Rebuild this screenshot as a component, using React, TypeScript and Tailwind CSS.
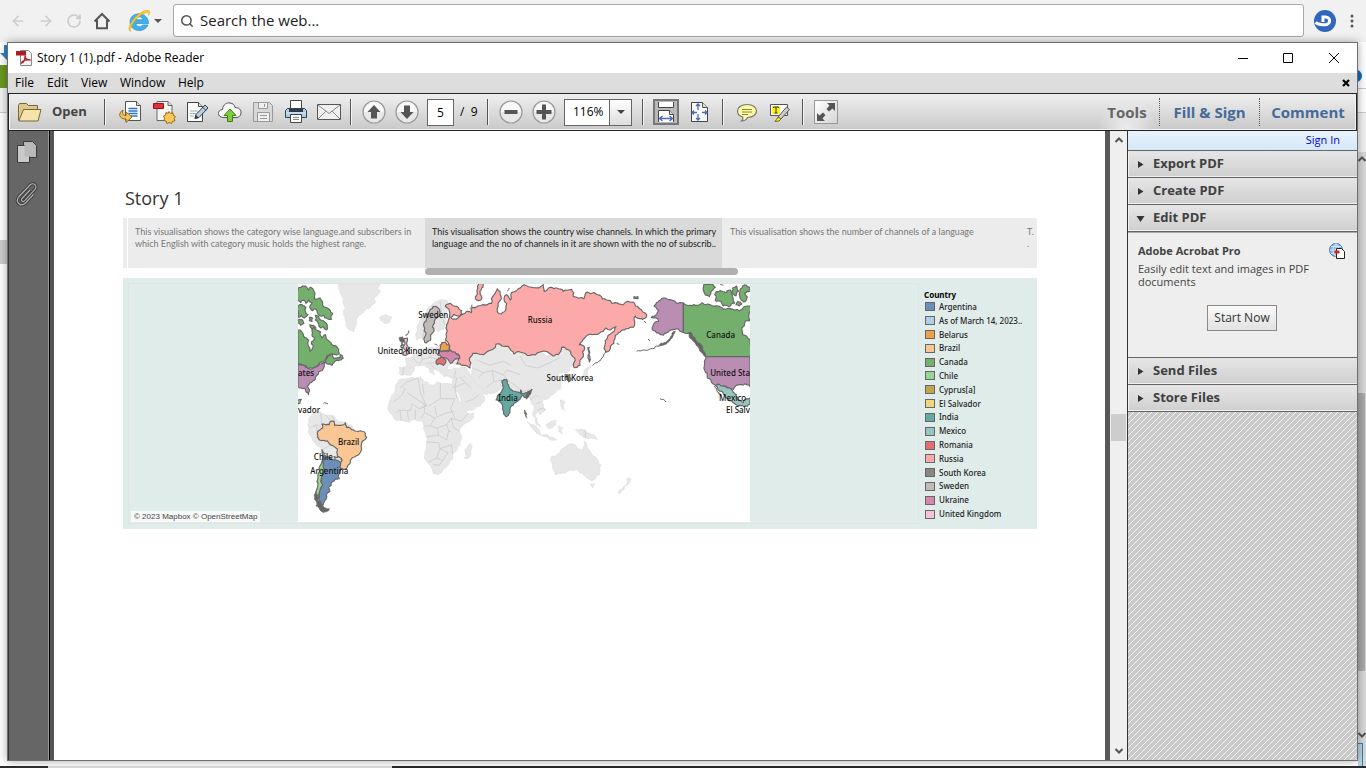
import React from "react";
import { ArrowLeft, ArrowRight, RotateCw, Search } from "lucide-react";

type Pt = [number, number];

function parse(s: string): Pt[] {
  return s
    .trim()
    .split(/\s+/)
    .map((p) => p.split(",").map(Number) as Pt);
}

function noise(a: number, b: number) {
  const v = Math.sin(a * 12.9898 + b * 78.233) * 43758.5453;
  return (v - Math.floor(v)) * 2 - 1;
}

// Breaks the long edges of a coast into small irregular steps.
function coast(s: string, amount = 0.16, closed = true) {
  let pts = parse(s);
  for (let pass = 0; pass < 2; pass++) {
    const out: Pt[] = [];
    pts.forEach((p, i) => {
      out.push(p);
      if (!closed && i === pts.length - 1) return;
      const q = pts[(i + 1) % pts.length];
      const dx = q[0] - p[0];
      const dy = q[1] - p[1];
      const straight = (dx === 0 || dy === 0) && Math.hypot(dx, dy) > 60;
      if (Math.hypot(dx, dy) < 7 || straight) return;
      const n = noise(p[0] + q[0], p[1] + q[1]) * amount;
      out.push([(p[0] + q[0]) / 2 - dy * n, (p[1] + q[1]) / 2 + dx * n]);
    });
    pts = out;
  }
  return "M" + pts.map((p) => p[0].toFixed(1) + "," + p[1].toFixed(1)).join("L") + (closed ? "Z" : "");
}

const plainLand = [
  "145,18 270,18 262,30 272,42 250,60 256,74 240,90 222,100 205,115 198,140 192,162 180,155 168,140 160,110 166,90 160,60 150,40",
  "268,118 278,113 290,110 306,118 300,130 284,136 272,128",
  "56,425 66,410 75,405 90,402 108,412 128,412 145,432 170,436 190,450 160,520 155,550 120,560 98,540 98,515 78,500 66,480 58,450",
  "375,170 380,145 398,110 415,88 440,70 468,66 474,90 466,130 462,152 445,162 436,150 425,170 408,192 394,180 380,185",
  "328,268 350,264 373,270 370,282 356,292 334,292 328,284",
  "346,242 366,236 380,226 398,212 408,214 440,210 466,195 480,216 505,240 500,258 476,262 470,280 452,286 440,276 428,272 434,290 422,284 405,262 388,262 372,268 352,264",
  "450,282 478,274 506,272 530,270 540,288 530,300 490,300 462,296",
  "488,304 520,296 540,290 560,312 590,328 612,334 604,346 576,346 584,362 572,382 550,396 526,400 514,372 500,340 488,322",
  "538,240 548,226 590,222 618,198 655,205 665,228 720,232 750,222 790,234 805,230 815,208 835,215 852,238 856,258 840,268 828,286 806,284 814,310 812,332 792,348 762,364 748,356 760,380 766,396 752,410 742,398 734,410 742,432 750,448 738,438 728,404 722,366 700,350 664,352 640,330 600,345 566,324 545,300 548,270",
  "328,304 366,298 392,296 398,312 428,322 444,312 488,320 500,350 516,384 534,406 550,404 540,430 508,462 510,500 488,528 478,556 456,582 430,586 418,560 404,530 410,492 402,456 398,430 372,424 342,430 316,426 296,400 298,370 316,336",
  "525,515 542,496 546,510 534,542 523,540",
  "785,535 810,524 826,506 842,498 858,502 864,514 878,516 882,490 892,508 904,524 922,544 934,562 928,590 912,606 892,600 880,590 860,574 828,584 796,590 788,562",
  "902,618 914,618 908,630",
  "984,642 1000,626 1008,622 1002,634 988,648",
  "1008,620 1012,600 1024,604 1016,618",
  "712,432 728,440 750,464 756,474 742,468 722,446",
  "756,472 788,478 800,486 774,480",
  "768,440 784,430 798,426 796,442 786,450 772,448",
  "806,444 820,450 812,454 816,468 808,462",
  "856,454 884,456 912,470 922,484 906,480 886,478 866,464",
  "812,366 824,374 822,396 814,388",
  "888,272 904,262 896,274 892,292 878,300 866,304 880,290",
];

const innerBorders = [
  "M330,330L350,312L384,300M345,330L338,350L310,372M352,344L410,384L388,392L366,378M384,300L392,346L410,384M398,318L402,352M451,316V362L416,384M451,362H494M494,320L500,360M402,372L404,404L392,420M366,378L362,398L330,396L318,404M330,396L334,428M352,400L356,426M376,394L376,424M404,404L434,420L466,406L490,400M434,384L440,412M494,362L482,392L494,418M434,420L420,444L404,444M420,444L442,450L446,472L410,476M442,450L470,440L476,458L470,486L446,472M470,440L484,420L514,430L534,406M484,420L490,448L508,460M410,492L446,494L450,512L484,500M450,512L440,540L416,552M440,540L458,548L474,524L450,512M484,500L488,528M430,560L448,562L458,548M484,462L476,458",
  "M60,450L78,440L92,446M78,440L82,462M92,404L96,440M108,412L122,430M128,412L132,430M98,515L112,506L124,502M100,538L116,532",
  "M690,234L706,262L742,270L780,254L808,240M548,270L580,284L606,278L640,290L652,276L690,290M606,278L612,310L590,328M580,284L566,300M612,310L636,306M560,246L600,262L640,250L664,262M722,366L736,352L748,356M736,378L752,372M742,398L756,390L766,396M640,290L652,306L700,340L722,334",
  "M500,300L496,322M512,298L526,314L544,330M488,330L512,320L526,314M526,372L550,364L566,350M498,276L492,300",
  "M366,238L384,256M388,226L398,244L388,262M398,244L420,238L440,242M420,238V220M408,256L436,254M424,262L440,276M340,268L338,292M886,456V480M450,70L456,110L464,140M400,110L404,140L398,182",
];

type Shape = { d: string; c: string };
const countries: Shape[] = [
  { c: "#74af6d", d: "24,30 42,24 50,28 56,36 62,28 70,34 75,45 72,62 90,60 97,70 98,82 112,90 128,106 124,124 112,122 100,112 90,114 82,104 76,92 68,98 60,84 66,74 56,66 48,76 40,66 32,74 24,68" },
  { c: "#74af6d", d: "24,84 36,80 48,88 46,100 54,110 44,120 34,112 24,118" },
  { c: "#74af6d", d: "76,112 86,116 92,126 104,132 112,142 110,156 98,146 92,150 84,134 76,126" },
  { c: "#74af6d", d: "26,124 38,126 42,136 32,142 26,136" },
  { c: "#74af6d", d: "58,118 68,120 66,130 58,128" },
  { c: "#74af6d", d: "60,140 70,142 78,150 66,154" },
  { c: "#74af6d", d: "24,156 34,160 44,178 56,186 60,220 66,214 64,192 72,178 66,160 72,148 82,158 92,162 96,180 106,170 118,190 136,203 146,214 148,226 128,228 112,232 104,248 84,262 70,270 55,272 42,262 24,258" },
  { c: "#74af6d", d: "112,238 128,228 132,242 150,240 150,230 160,240 154,246 138,248 126,262 112,258 104,254" },
  { c: "#ba8db2", d: "24,260 42,262 55,272 75,268 104,252 102,268 86,282 76,304 60,314 52,325 58,340 56,350 48,342 44,330 24,326" },
  { c: "#96c5bf", d: "24,366 34,364 30,376 24,378" },
  { c: "#fac794", d: "82,468 90,455 98,450 96,438 118,440 122,430 132,430 134,442 152,442 166,434 170,448 185,455 205,460 226,466 230,478 214,502 210,525 195,536 182,545 176,560 160,574 146,562 156,545 142,535 142,512 125,502 112,488 95,488 82,478" },
  { c: "#dedede", d: "132,536 146,536 156,548 148,554 136,548" },
  { c: "#6c8fb7", d: "104,540 120,538 138,546 152,560 152,572 146,590 148,602 126,612 116,628 120,640 108,650 104,668 98,682 88,668 88,640 92,600 98,565" },
  { c: "#99d594", d: "96,515 102,525 99,565 94,600 89,640 88,660 80,662 78,645 84,620 84,600 92,560" },
  { c: "#f4c3d7", d: "342,182 352,180 350,194 354,206 360,214 358,226 348,232 338,230 348,216 340,204" },
  { c: "#c0bbb8", d: "430,85 445,90 450,100 440,120 430,140 432,155 422,170 420,188 408,195 402,180 404,150 410,120 420,95" },
  { c: "#fbaaa9", d: "466,85 480,76 500,85 515,98 510,115 490,110 482,118 498,124 525,106 532,100 544,104 548,88 580,80 605,76 612,50 622,32 630,40 628,70 622,100 634,108 648,94 642,62 650,50 662,66 664,44 680,38 702,20 760,20 762,40 784,28 800,30 820,40 845,34 850,56 882,62 892,42 930,52 950,66 985,76 1000,80 1030,72 1036,84 1055,96 1070,110 1066,120 1048,122 1036,114 1034,130 1030,148 1008,152 990,162 976,172 972,196 958,218 948,222 945,200 952,180 972,160 978,146 960,156 948,150 928,166 900,168 884,180 868,200 884,210 880,235 870,262 852,268 854,240 835,215 815,208 805,230 790,234 750,222 720,232 690,222 672,228 655,205 618,198 590,222 548,226 538,240 540,270 520,262 500,258 510,240 505,228 480,215 475,195 466,186 468,150 474,130" },
  { c: "#fbaaa9", d: "566,18 580,18 574,34 570,48 576,60 564,68 556,60 562,46" },
  { c: "#fbaaa9", d: "893,210 898,208 900,236 898,252 894,240" },
  { c: "#fbaaa9", d: "1032,56 1044,56 1044,62 1032,62" },
  { c: "#f09f4d", d: "448,216 450,202 465,192 480,204 478,215 462,218" },
  { c: "#d686ab", d: "442,230 448,218 462,219 480,217 495,222 508,232 506,242 490,248 482,256 475,245 455,240" },
  { c: "#e36f70", d: "438,255 446,240 462,242 468,252 460,262 442,260" },
  { c: "#66a8a2", d: "636,308 650,305 655,320 660,332 680,342 692,346 692,336 694,348 710,344 726,334 722,346 710,362 698,352 690,364 672,376 660,395 655,412 648,416 638,395 630,372 618,366 622,354 632,344 640,328" },
  { c: "#8b8b88", d: "830,290 840,290 844,304 836,312 830,304" },
  { c: "#ba8db2", d: "1180,75 1145,66 1120,60 1104,72 1092,85 1106,98 1100,108 1084,118 1106,130 1090,140 1090,158 1105,165 1120,172 1138,158 1160,152 1180,163" },
  { c: "#74af6d", d: "1180,75 1200,82 1222,82 1236,74 1260,80 1284,84 1300,94 1320,92 1348,98 1380,84 1380,128 1364,134 1356,150 1358,170 1380,184 1380,236 1248,236 1236,214 1226,200 1210,186 1202,168 1180,163" },
  { c: "#74af6d", d: "1242,18 1266,18 1276,28 1262,42 1258,56 1244,46" },
  { c: "#74af6d", d: "1274,50 1290,38 1306,44 1320,36 1328,56 1334,76 1318,86 1300,84 1292,70 1276,68" },
  { c: "#74af6d", d: "1328,30 1340,24 1346,40 1338,54 1328,46" },
  { c: "#74af6d", d: "1350,36 1358,24 1380,28 1380,40 1364,46 1372,58 1360,72 1350,60" },
  { c: "#74af6d", d: "1344,70 1356,78 1348,84 1338,80" },
  { c: "#ba8db2", d: "1248,236 1380,236 1380,326 1368,318 1350,320 1330,334 1312,328 1298,324 1270,318 1252,300 1244,276 1244,256" },
  { c: "#96c5bf", d: "1278,322 1298,324 1312,330 1328,338 1338,352 1346,368 1360,374 1370,362 1380,360 1380,378 1362,386 1338,380 1318,368 1304,352 1296,340" },
];

const darkBits = [
  "78,640 86,656 88,670 98,684 104,690 118,692 116,698 104,702 90,696 78,684 73,664",
  "328,178 338,176 344,190 336,196 342,204 332,206 336,192",
  "346,172 356,158 352,170",
  "1198,162 1212,176 1226,196 1238,214 1248,234 1240,228 1224,206 1206,184",
  "1106,202 1122,194 1136,184 1146,166 1156,160 1142,184 1124,200",
  "704,396 708,404 712,420 706,410",
  "716,340 722,336 718,352 710,360 708,350",
  "1272,324 1280,334 1290,350 1294,354 1282,342",
];

const islandLines = [
  "1040,220 1060,216 1082,212 1100,204 1124,194",
  "908,262 926,250 940,236 952,220",
  "1110,362 1120,364 1128,372",
  "100,376 114,378",
  "1062,130 1068,134",
  "1074,184 1080,188",
  "980,196 988,200",
  "540,92 546,80",
  "652,40 658,30",
  "1290,18 1300,22",
  "434,198 442,202",
  "330,206 336,210",
];

type Anchor = "start" | "middle" | "end";
const labels: { t: string; x: number; y: number; a?: Anchor }[] = [
  { t: "Sweden", x: 430, y: 119 },
  { t: "United Kingdom", x: 356, y: 227 },
  { t: "Russia", x: 750, y: 134 },
  { t: "India", x: 654, y: 368 },
  { t: "South Korea", x: 840, y: 308 },
  { t: "Canada", x: 1292, y: 179 },
  { t: "United Sta", x: 1380, y: 293, a: "end" },
  { t: "Mexico", x: 1328, y: 368 },
  { t: "El Salv", x: 1380, y: 404, a: "end" },
  { t: "ates", x: 24, y: 293, a: "start" },
  { t: "vador", x: 24, y: 404, a: "start" },
  { t: "Brazil", x: 176, y: 500 },
  { t: "Chile", x: 100, y: 545 },
  { t: "Argentina", x: 118, y: 587 },
];

function WorldMap() {
  return (
    <svg viewBox="24 18 1356 714" className="block h-[238px] w-[452px] bg-white" role="img" aria-label="Channels by country">
      <g fill="#e7e7e7" stroke="#dcdcdc" strokeWidth="2">
        {plainLand.map((d, i) => (
          <path key={i} d={coast(d, 0.2)} />
        ))}
      </g>
      <g fill="none" stroke="#c6c6c6" strokeWidth="2">
        {innerBorders.map((d, i) => (
          <path key={i} d={d} />
        ))}
      </g>
      <g stroke="#666" strokeWidth="3.4" strokeLinejoin="round">
        {countries.map((s, i) => (
          <path key={i} d={coast(s.d, 0.22)} fill={s.c} />
        ))}
      </g>
      <g fill="#666" stroke="#666" strokeWidth="2">
        {darkBits.map((d, i) => (
          <path key={i} d={coast(d, 0.22)} />
        ))}
      </g>
      <g fill="none" stroke="#666" strokeWidth="3">
        {islandLines.map((d, i) => (
          <path key={i} d={coast(d, 0.2, false)} />
        ))}
      </g>
      <g fill="#111" fontFamily='"Noto Sans", sans-serif' fontSize="24" fontWeight="500">
        {labels.map((l, i) => (
          <text key={i} x={l.x} y={l.y} textAnchor={l.a ?? "middle"}>
            {l.t}
          </text>
        ))}
      </g>
    </svg>
  );
}

const legend: [string, string][] = [
  ["Argentina", "bg-[#6c8fb7]"],
  ["As of March 14, 2023..", "bg-[#abd0e8]"],
  ["Belarus", "bg-[#f09f4d]"],
  ["Brazil", "bg-[#fac794]"],
  ["Canada", "bg-[#74af6d]"],
  ["Chile", "bg-[#99d594]"],
  ["Cyprus[a]", "bg-[#bda64d]"],
  ["El Salvador", "bg-[#efd57d]"],
  ["India", "bg-[#66a8a2]"],
  ["Mexico", "bg-[#96c5bf]"],
  ["Romania", "bg-[#e36f70]"],
  ["Russia", "bg-[#fbaaa9]"],
  ["South Korea", "bg-[#8b8682]"],
  ["Sweden", "bg-[#c0bbb8]"],
  ["Ukraine", "bg-[#d686ab]"],
  ["United Kingdom", "bg-[#f4c3d7]"],
];

const Ico = ({ children }: { children: React.ReactNode }) => (
  <svg viewBox="0 0 24 24" className="size-6" aria-hidden="true">
    {children}
  </svg>
);

const fileIcons: { name: string; art: React.ReactNode }[] = [
  {
    name: "Convert",
    art: (
      <>
        <path d="M6.500 1.500h11l4 4v15h-15z" fill="#fafafa" stroke="#555" strokeLinejoin="round" />
        <path d="M17.500 1.500v4h4" fill="#ddd" stroke="#555" />
        <path d="M9.500 8.500h9M9.500 11h9M9.500 13.500h9M12 16h6.500" stroke="#2f78c4" strokeWidth="1.300" />
        <path d="M4 10c-5 3-4.500 9 3 9v3.500l6-5.500-6-5v3.500c-3 0-4-1.500-3-5.500z" fill="#f4c45c" stroke="#8f6411" strokeLinejoin="round" />
      </>
    ),
  },
  {
    name: "Create PDF",
    art: (
      <>
        <path d="M5 1.500h11l4 4v15H5z" fill="#f5f5f5" stroke="#666" strokeLinejoin="round" />
        <path d="M16 1.500v4h4" fill="#ddd" stroke="#666" />
        <path d="M1.500 3.500h10v5h-10z" fill="#e0303a" stroke="#9c1119" />
        <path d="M17 11.500l1.600 2 2.400-.6.300 2.500 2.200 1.200-1.400 2 .9 2.300-2.500.4-1 2.200-2.300-1-2.300 1-.8-2.400-2.400-.6 1-2.200-1.300-2.100 2.200-1.100.3-2.500 2.300.7z" fill="#fcc85a" stroke="#9a6a10" />
      </>
    ),
  },
  {
    name: "Edit text",
    art: (
      <>
        <path d="M2.500 2.500h11l4 4v15h-15z" fill="#fafafa" stroke="#444" strokeLinejoin="round" />
        <path d="M13.500 2.500v4h4" fill="#ddd" stroke="#444" />
        <path d="M5 11h8M5 13.500h6M5 16h4" stroke="#aaa" />
        <path d="M10 18.500l1-4L20 5l3 3-9 9.500z" fill="#b9cde0" stroke="#2f3d4d" strokeLinejoin="round" />
        <path d="M10 18.500l1-3 2 2zM18 7.500l3 3" fill="#2f3d4d" stroke="#2f3d4d" />
      </>
    ),
  },
  {
    name: "Upload",
    art: (
      <>
        <path d="M5 17.500C-1 17-1 10 4.500 9.500 5 4 9 2.500 12 3c3 .3 4.500 2 5 4.500 4 0 6.500 2.500 6 5.500-.3 3-2 4.500-5 4.500z" fill="#f7f7f7" stroke="#555" />
        <path d="M12 9l6 6.500h-3.500v6h-5v-6H6z" fill="#7fcc3d" stroke="#3f7d13" strokeLinejoin="round" />
      </>
    ),
  },
  {
    name: "Save",
    art: (
      <>
        <path d="M2.500 2.500h16l3 3v16h-19z" fill="#d8d8d8" stroke="#999" />
        <path d="M7.500 2.500h9v6h-9zM6.500 12.500h12v9h-12z" fill="#eee" stroke="#999" />
        <path d="M13.500 4v3M9 15.500h7M9 18.500h7" stroke="#999" />
      </>
    ),
  },
  {
    name: "Print",
    art: (
      <>
        <path d="M6.500.5h11v9h-11z" fill="#fff" stroke="#444" />
        <path d="M3.500 8.500h17l2 2v7h-21v-7z" fill="#a9cbe4" stroke="#2d4254" strokeLinejoin="round" />
        <path d="M2 13h20" stroke="#e2eff8" />
        <path d="M5 9h14v3H5z" fill="#2f3b46" />
        <path d="M6.500 14.500h11v8h-11z" fill="#fff" stroke="#444" />
        <path d="M9 17.500h6M9 19.500h6" stroke="#888" />
      </>
    ),
  },
  {
    name: "Mail",
    art: (
      <>
        <path d="M.5 4.500h23v15H.5z" fill="#efefef" stroke="#555" />
        <path d="M1 5l11 8.500L23 5M1 19l8-8M23 19l-8-8" fill="none" stroke="#888" />
      </>
    ),
  },
];

const Round = ({ label, children }: { label: string; children: React.ReactNode }) => (
  <button aria-label={label} className="flex w-[33px] justify-center">
    <svg viewBox="0 0 24 24" className="size-6" aria-hidden="true">
      <circle cx="12" cy="12" r="11" fill="#e8e8e8" stroke="#999" strokeWidth="1.200" />
      <path d="M2 12a10 10 0 0 1 20 0z" fill="#f8f8f8" />
      {children}
    </svg>
  </button>
);

const Sep = () => <div className="h-[26px] w-[2px] shrink-0 border-l border-[#555] bg-[#f4f4f4]" />;

function Toolbar() {
  return (
    <div className="flex h-[38px] items-center border border-[#222] bg-linear-to-b from-[#efefef] to-[#c9c9c9] shadow-[inset_0_0_0_1px_#f2f2f2]">
      <button className="mr-[10px] ml-2 flex w-[77px] items-center gap-[10px] text-[13px] font-bold text-[#444]">
        <svg viewBox="0 0 25 22" className="h-[22px] w-[25px] shrink-0" aria-hidden="true">
          <path d="M1.500 19.500v-15l1-2h7l2 2h9v4" fill="#dcc88c" stroke="#77683a" />
          <path d="M6.500 8.500h17.500l-3 11.500H1.800z" fill="#f5e3ab" stroke="#77683a" strokeLinejoin="round" />
        </svg>
        Open
      </button>
      <Sep />
      <div className="flex pr-[5px] pl-2">
        {fileIcons.map((f) => (
          <button key={f.name} aria-label={f.name} className="flex w-[33px] justify-center">
            <Ico>{f.art}</Ico>
          </button>
        ))}
      </div>
      <Sep />
      <div className="ml-[5px] flex items-center">
        <Round label="Previous page">
          <path d="M12 5l6.500 7H15v6.500H9V12H5.500z" fill="#555" />
        </Round>
        <Round label="Next page">
          <path d="M12 19l6.500-7H15V5.500H9V12H5.500z" fill="#555" />
        </Round>
      </div>
      <input
        aria-label="Page number"
        defaultValue="5"
        className="ml-1 h-[27px] w-[27px] border border-[#666] bg-white text-center text-xs text-black"
      />
      <span className="ml-[6px] w-[27px] whitespace-pre text-xs text-black">/  9</span>
      <Sep />
      <div className="ml-[5px] flex items-center">
        <Round label="Zoom out">
          <path d="M5.500 10h13v4h-13z" fill="#555" />
        </Round>
        <Round label="Zoom in">
          <path d="M10 4.500h4V10h5.500v4H14v5.500h-4V14H4.500v-4H10z" fill="#555" />
        </Round>
      </div>
      <div className="relative ml-1 h-[27px] w-[68px] border border-[#666] bg-white">
        <select aria-label="Zoom level" defaultValue="116%" className="block h-full w-full appearance-none bg-transparent pl-2 text-xs text-black">
          <option>100%</option>
          <option>116%</option>
          <option>150%</option>
        </select>
        <span className="pointer-events-none absolute inset-y-0 right-0 flex w-[22px] items-center justify-center border-l border-[#666] bg-linear-to-b from-white to-[#ddd]">
          <svg viewBox="0 0 8 4" className="h-1 w-2" aria-hidden="true">
            <path d="M0 0h8L4 4z" fill="#444" />
          </svg>
        </span>
      </div>
      <div className="ml-[10px]">
        <Sep />
      </div>
      <button aria-label="Fit width" aria-pressed="true" className="ml-[9px] flex size-[26px] items-center justify-center border-2 border-[#777] bg-[#b9b9b9]">
        <svg viewBox="0 0 22 22" className="size-[22px]" aria-hidden="true">
          <path d="M3.500 1v5.500h15V1" fill="#fff" stroke="#444" />
          <path d="M3.500 21V9.500h11l4 4V21" fill="#fff" stroke="#444" />
          <path d="M14.500 9.500v4h4" fill="#ddd" stroke="#444" />
          <path d="M4.500 17.500h13M7.500 15l-3 2.500 3 2.500M14.500 15l3 2.500-3 2.500" fill="none" stroke="#4b6cb0" strokeWidth="1.400" />
        </svg>
      </button>
      <button aria-label="Fit page" className="ml-[8px] flex w-6 justify-center">
        <Ico>
          <path d="M4.500 2.500h11l5 5v14h-16z" fill="#fafafa" stroke="#444" strokeLinejoin="round" />
          <path d="M15.500 2.500v5h5" fill="#ddd" stroke="#555" />
          <path d="M11 4v6M11 14v6M5 12.500h5M15 12.500h5M9 6l2-2 2 2M9 18l2 2 2-2M7 10.500l-2 2 2 2M18 10.500l2 2-2 2" fill="none" stroke="#4b6cb0" strokeWidth="1.300" />
        </Ico>
      </button>
      <div className="ml-[11px]">
        <Sep />
      </div>
      <button aria-label="Add note" className="ml-[6px] flex w-[33px] justify-center">
        <Ico>
          <path d="M12 4.500c6 0 9.500 3 9.500 6.500s-3.500 6.500-9 6.500c-1.500 3-4 3.500-6 3.500 1.200-1 1.600-2.500 1.300-4C4 16 2.500 13.500 2.500 11c0-3.500 3.500-6.500 9.500-6.500z" fill="#fdf9a0" stroke="#777" strokeWidth="1.200" />
          <path d="M7 9.500h10M7 12h10M7 14.500h6" stroke="#8a8650" />
        </Ico>
      </button>
      <button aria-label="Highlight text" className="flex w-[33px] justify-center">
        <Ico>
          <path d="M2.500 4.500h17v11h-17z" fill="#fff" stroke="#555" />
          <path d="M4 6h8v8H4z" fill="#fdf21c" />
          <path d="M5.500 8V7h5v1M8 7v6M6.500 13h3" fill="none" stroke="#333" />
          <path d="M10 17l8.500-10 3 2.500-8.500 9.500z" fill="#ccc" stroke="#555" strokeLinejoin="round" />
          <path d="M10 17l3 2-2 2-4 .5 1.500-2z" fill="#f7e62c" stroke="#77701a" />
        </Ico>
      </button>
      <div className="ml-[6px]">
        <Sep />
      </div>
      <button aria-label="Read mode" className="ml-[10px] flex size-6 items-center justify-center border border-[#999] bg-linear-to-br from-white to-[#d5d5d5]">
        <svg viewBox="0 0 22 22" className="size-[22px]" aria-hidden="true">
          <path d="M12 2h8v8l-2.500-2.500-3.500 3L11.500 8l3-3.500zM2 12l2.500 2.500L8 11.500l2.500 2.500-3 3.500L10 20H2z" fill="#555" />
        </svg>
      </button>
      <nav className="ml-auto flex h-full items-center text-[15px] font-bold">
        <a href="#tools" className="flex h-full w-16 items-center justify-center bg-[radial-gradient(ellipse_at_bottom,#ededed_0%,transparent_65%)] text-[#666]">Tools</a>
        <a href="#sign" className="flex h-7 w-[100px] items-center justify-center border-l border-dotted border-[#555] text-[#466a99]">Fill &amp; Sign</a>
        <a href="#comment" className="flex h-7 w-[97px] items-center justify-center border-l border-dotted border-[#555] text-[#466a99]">Comment</a>
      </nav>
    </div>
  );
}

const PanelHead = ({ title, open }: { title: string; open?: boolean }) => (
  <button
    aria-expanded={!!open}
    className="flex h-[27px] w-full items-center gap-2 border-b border-[#666] bg-linear-to-b from-[#e6e6e6] to-[#cfcfcf] pl-2 text-[13px] font-bold text-[#404040] shadow-[inset_1px_-1px_0_#f0f0f0]"
  >
    <svg viewBox="0 0 9 9" className="size-[9px]" aria-hidden="true">
      <path d={open ? "M.5 2h8l-4 6z" : "M2 1l5.500 3.500L2 8z"} fill="#333" />
    </svg>
    {title}
  </button>
);

function ToolsPanel() {
  return (
    <aside className="flex w-[230px] shrink-0 flex-col border-l border-[#333] bg-[#eee]">
      <div className="flex h-5 items-center justify-end border-b border-[#666] bg-linear-to-b from-[#e9f4fd] to-[#d4e8f8] pr-[17px] text-[11px]">
        <a href="#signin" className="text-[#0000e0]">Sign In</a>
      </div>
      <PanelHead title="Export PDF" />
      <PanelHead title="Create PDF" />
      <PanelHead title="Edit PDF" open />
      <section className="flex h-[126px] flex-col border-t border-b border-t-[#aaa] border-b-[#666] pt-[9px] pr-[11px] pl-[10px] text-[#444]">
        <div className="flex items-center justify-between">
          <h2 className="text-[11px] font-bold">Adobe Acrobat Pro</h2>
          <svg viewBox="0 0 18 18" className="size-[18px]" aria-hidden="true">
            <circle cx="8" cy="8" r="6.500" fill="#8fb9e6" stroke="#3f74b5" />
            <path d="M8 1.500v13M1.500 8h13M3 4.500h10M3 11.500h10M8 1.500c-4 4-4 9 0 13M8 1.500c4 4 4 9 0 13" fill="none" stroke="#e3f0fb" strokeWidth=".7" />
            <path d="M8.500 6.500h5l3 3v7h-8z" fill="#fff" stroke="#222" />
            <path d="M6.500 8.500h5v3h-5z" fill="#d22" />
          </svg>
        </div>
        <p className="mt-[2px] text-[11px] leading-[13px]">Easily edit text and images in PDF documents</p>
        <button className="mt-[17px] h-[26px] w-[70px] self-center border border-[#888] bg-linear-to-b from-[#fafafa] to-[#e2e2e2] text-xs text-[#333]">
          Start Now
        </button>
      </section>
      <PanelHead title="Send Files" />
      <PanelHead title="Store Files" />
      <div className="flex-1 bg-[linear-gradient(135deg,#cacaca_44%,#f4f4f4_44%,#f4f4f4_56%,#cacaca_56%)] bg-[length:6px_6px]" />
    </aside>
  );
}

function StoryPage() {
  return (
    <article className="min-w-0 flex-1 bg-white pt-[54px] pr-[68px] pl-[69px]">
      <h1 className="ml-[2px] h-[33px] text-[18px] leading-[26px] text-[#333]">Story 1</h1>
      <div className="flex h-[50px] bg-[#ececec] font-[Lato,sans-serif] text-[9px] leading-3 text-[#777]">
        <div className="w-[5px] shrink-0 border-r border-white" />
        <button className="flex w-[297px] shrink-0 items-start px-[7px] pt-2 text-left">
          <span className="whitespace-nowrap">
            This visualisation shows the category wise language.and subscribers in
            <br />
            which English with category music holds the highest range.
          </span>
        </button>
        <button aria-current="true" className="flex w-[297px] shrink-0 items-start bg-[#dadada] px-[7px] pt-2 text-left text-[#222]">
          <span className="whitespace-nowrap">
            This visualisation shows the country wise channels. In which the primary
            <br />
            language and the no of channels in it are shown with the no of subscrib..
          </span>
        </button>
        <button className="flex min-w-0 flex-1 items-start px-2 pt-2 text-left">
          This visualisation shows the number of channels of a language
        </button>
        <button className="flex w-[10px] shrink-0 items-start pt-2 text-left">
          <span>
            T.
            <br />.
          </span>
        </button>
      </div>
      <div className="ml-[302px] h-[7px] w-[313px] rounded-full bg-[#b0b0b0]" />
      <div className="mt-[3px] flex h-[251px] bg-[#dfecea] pt-[5px] pb-[5px] pl-[5px]">
        <figure className="relative flex min-w-0 flex-1 justify-center border border-[#e3e3e3]">
          <WorldMap />
          <figcaption className="absolute bottom-px left-[2px] bg-[#f7faf9] px-[3px] font-['Liberation_Sans',sans-serif] text-[8px] leading-[11px] text-[#444]">
            © 2023 Mapbox © OpenStreetMap
          </figcaption>
        </figure>
        <div className="w-[118px] shrink-0 pt-[7px] pl-[5px] font-['Noto_Sans',sans-serif] text-[8px] text-[#222]">
          <h2 className="h-[10px] leading-[10px] font-bold text-black">Country</h2>
          <ul className="grid h-[221px] auto-rows-fr pl-[1px] font-medium">
            {legend.map(([name, color]) => (
              <li key={name} className="flex min-h-0 items-center gap-1 leading-[10px] whitespace-nowrap">
                <span className={`h-[9px] w-[10px] border border-[#666] ${color}`} />
                {name}
              </li>
            ))}
          </ul>
        </div>
      </div>
    </article>
  );
}

const Chevron = ({ down }: { down?: boolean }) => (
  <svg viewBox="0 0 8 8" className="size-2" aria-hidden="true">
    <path d={down ? "M.5 2L4 5.500 7.500 2" : "M.5 6L4 2.500 7.500 6"} fill="none" stroke="#555" strokeWidth="2" />
  </svg>
);

function ReaderWindow() {
  return (
    <main className="relative flex min-w-0 flex-1 flex-col border border-[#6e6e6e] bg-white shadow-[0_0_9px_rgba(0,0,0,0.35)]">
      <header className="flex h-[30px] items-center bg-white pl-2 text-xs text-black">
        <svg viewBox="0 0 16 16" className="size-4" aria-hidden="true">
          <path d="M4.500.5h8l3 3v12h-11z" fill="#f4f4f4" stroke="#888" />
          <path d="M0 1h10v4.500H0z" fill="#b11b22" />
          <path d="M9 5.500c.5 4-1.500 7.500-3.500 7.500.5-2.500 6-4 9-3-3 0-5.500-1.500-5.500-4.500z" fill="none" stroke="#b11b22" strokeWidth="1.300" />
        </svg>
        <span className="ml-[5px]">Story 1 (1).pdf - Adobe Reader</span>
        <div className="ml-auto flex">
          <button aria-label="Minimize" className="flex h-[30px] w-[44px] items-center justify-center">
            <svg viewBox="0 0 10 10" className="size-[10px]"><path d="M0 5.500h10" stroke="#000" /></svg>
          </button>
          <button aria-label="Maximize" className="flex h-[30px] w-[46px] items-center justify-center">
            <svg viewBox="0 0 10 10" className="size-[10px]"><path d="M.5.5h9v9h-9z" fill="none" stroke="#000" /></svg>
          </button>
          <button aria-label="Close" className="flex h-[30px] w-[46px] items-center justify-center">
            <svg viewBox="0 0 10 10" className="size-[10px]"><path d="M0 0l10 10M10 0L0 10" stroke="#000" /></svg>
          </button>
        </div>
      </header>
      <div className="flex h-5 items-center bg-[#ddd] pl-[7px] text-xs text-black">
        <button className="w-8 text-left">File</button>
        <button className="w-[34px] text-left">Edit</button>
        <button className="w-[39px] text-left">View</button>
        <button className="w-[58px] text-left">Window</button>
        <button className="text-left">Help</button>
        <button aria-label="Close document" className="ml-auto mr-[7px]">
          <svg viewBox="0 0 8 8" className="size-2"><path d="M1 1l6 6M7 1L1 7" stroke="#000" strokeWidth="2.200" /></svg>
        </button>
      </div>
      <Toolbar />
      <div className="flex min-h-0 flex-1">
        <div className="flex w-[42px] shrink-0 flex-col items-center border-r border-l border-r-black border-l-[#333] bg-[#666] pt-[9px] shadow-[inset_-1px_0_0_#999]">
          <button aria-label="Page thumbnails" className="mr-1">
            <svg viewBox="0 0 22 24" className="h-6 w-[22px]">
              <path d="M7.500 1.500h9l4 4v12h-13z" fill="#b5b5b5" stroke="#3c3c3c" />
              <path d="M1.500 5.500h12v17h-12z" fill="#c9c9c9" stroke="#3c3c3c" />
              <path d="M8.500 2.500h7.500v3.500h3.500v10.500h-11z" fill="#b9b9b9" />
            </svg>
          </button>
          <button aria-label="Attachments" className="mt-[18px] mr-1">
            <svg viewBox="0 0 24 26" className="h-[26px] w-6">
              <path d="M15 8L7 16.500c-1.500 2 .8 4 2.500 2.300l10-11C23 4 18.500-.5 15 3L4 14.500c-4.500 5.500 1.500 11 6.500 6.500l8-8.500" fill="none" stroke="#3c3c3c" strokeWidth="3.200" />
              <path d="M15 8L7 16.500c-1.500 2 .8 4 2.500 2.300l10-11C23 4 18.500-.5 15 3L4 14.500c-4.500 5.500 1.500 11 6.500 6.500l8-8.500" fill="none" stroke="#b0b0b0" strokeWidth="1.200" />
            </svg>
          </button>
        </div>
        <div className="w-1 shrink-0 bg-[#555]" />
        <StoryPage />
        <div className="w-[5px] shrink-0 bg-[#585858]" />
        <div className="flex w-[17px] shrink-0 flex-col items-center bg-[#efefef] py-[5px]">
          <Chevron />
          <div className="mt-[270px] h-[27px] w-[15px] bg-[#cdcdcd]" />
          <div className="mt-auto">
            <Chevron down />
          </div>
        </div>
        <ToolsPanel />
      </div>
    </main>
  );
}

export default function App() {
  return (
    <div className="flex h-screen min-h-[600px] flex-col overflow-hidden bg-[#f1f1f1] font-['Open_Sans',sans-serif]">
      <div className="flex h-[42px] shrink-0 items-start bg-[#f1f1f1]">
        <div className="flex h-[41px] w-[173px] items-center pl-[10px]">
          <button aria-label="Back" className="w-7"><ArrowLeft className="size-4 text-[#ccc]" strokeWidth={2.4} /></button>
          <button aria-label="Forward" className="w-7"><ArrowRight className="size-4 text-[#ccc]" strokeWidth={2.4} /></button>
          <button aria-label="Reload" className="w-[27px]"><RotateCw className="size-4 text-[#ccc]" strokeWidth={2.6} /></button>
          <button aria-label="Home" className="w-[34px]">
            <svg viewBox="0 0 18 18" className="size-[18px]">
              <path d="M1.500 9.500L9 2l7.500 7.500M4 8v8.200h10V8" fill="none" stroke="#555" strokeWidth="2" />
            </svg>
          </button>
          <button aria-label="Internet Explorer" className="flex items-center gap-[3px]">
            <svg viewBox="0 0 24 24" className="size-6">
              <path d="M21.500 14.500H9c.3 3.800 5 4.300 6.800 1.500h5.200C18 24 3 23.500 3 12.800 3 2 21.500 1.500 21.500 14.500zM9 10.800h6.800c-.5-4-6.300-4-6.800 0z" fill="#3fb0ea" stroke="#1d86c8" strokeWidth=".6" fillRule="evenodd" />
              <path d="M3.500 22.500C-2 21 8 3 20 1.200c3.500-.3 3 2.800 1.500 5.300.5-2 .3-3.200-1.500-3C12 4.500 2 17 3.500 22.500z" fill="#f8c92c" stroke="#dca512" strokeWidth=".5" />
            </svg>
            <svg viewBox="0 0 8 4" className="h-1 w-2"><path d="M0 0h8L4 4z" fill="#555" /></svg>
          </button>
        </div>
        <label className="mt-1 flex h-[33px] min-w-0 flex-1 items-center gap-[6px] rounded-[3px] border border-[#a8a8a8] bg-white pl-[6px]">
          <Search className="size-[14px] text-[#555]" strokeWidth={2.6} aria-hidden="true" />
          <input aria-label="Search the web" placeholder="Search the web..." className="min-w-0 flex-1 text-[15px] text-black outline-none placeholder:text-[#222]" />
        </label>
        <div className="flex h-[41px] w-[62px] items-center pl-[10px]">
          <button aria-label="Profile">
            <svg viewBox="0 0 22 22" className="size-[22px]">
              <circle cx="11" cy="11" r="11" fill="#2f67bd" />
              <path d="M1.500 12.500c2 1.500 4 2 6.800 2.200h3.400a3.900 3.900 0 0 0 0-7.800H9V12" fill="none" stroke="#fff" strokeWidth="3" />
            </svg>
          </button>
          <button aria-label="Menu" className="ml-[14px]">
            <svg viewBox="0 0 4 14" className="h-[14px] w-1">
              <circle cx="2" cy="2" r="1.500" fill="#555" />
              <circle cx="2" cy="7" r="1.500" fill="#555" />
              <circle cx="2" cy="12" r="1.500" fill="#555" />
            </svg>
          </button>
        </div>
      </div>
      <div className="relative flex min-h-0 flex-1 bg-white pr-2 pb-[5px] pl-[7px]">
        <div className="absolute inset-y-0 left-0 flex w-[7px] flex-col overflow-hidden" aria-hidden="true">
          <svg viewBox="0 0 7 23" className="h-[23px] w-[7px]"><path d="M4 3h3v15L0 11h4z" fill="#2b86d0" /></svg>
          <div className="h-[23px] bg-[#6b9a20]" />
          <div className="h-[25px] border-b border-[#ccc] bg-[#f4f4f4]" />
          <div className="mt-[127px] h-6 bg-[#ccc]" />
        </div>
        <div className="absolute inset-y-0 right-0 flex w-2 flex-col overflow-hidden" aria-hidden="true">
          <svg viewBox="0 0 8 46" className="h-[46px] w-2"><circle cx="-2" cy="34" r="6" fill="#0c6cc0" /></svg>
          <div className="h-[25px] border-t border-b border-[#ccc]" />
          <div className="h-[39px] bg-[#f1f1f1]" />
          <div className="flex flex-1 flex-col bg-[#d8d8d8]">
            <div className="pt-[3px]"><Chevron /></div>
            <div className="mt-[230px] h-[278px] w-[7px] bg-[#a9a9a9]" />
            <div className="mt-[60px]"><Chevron down /></div>
            <div className="mt-1 w-[5px] flex-1 border-t border-r border-[#2a86c0] bg-[#bcd3df]" />
          </div>
        </div>
        <ReaderWindow />
      </div>
      <div className="flex h-[2px] shrink-0" aria-hidden="true">
        <div className="w-12 bg-[#2f2f2f]" />
        <div className="w-[344px] bg-[#dcdcdc]" />
        <div className="flex-1 bg-[#2b2b2f]" />
      </div>
    </div>
  );
}
